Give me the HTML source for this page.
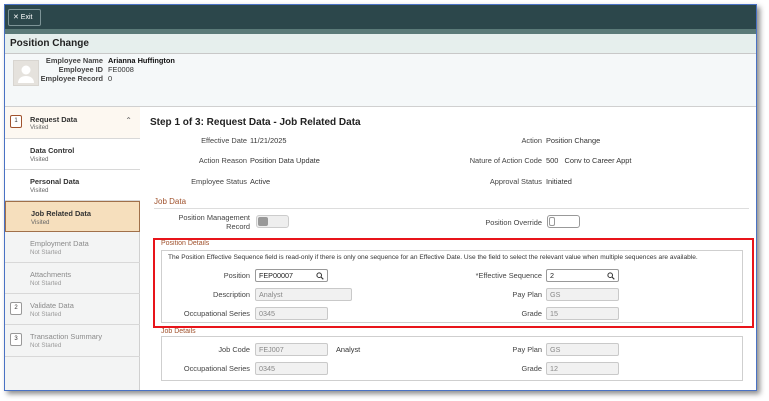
<!DOCTYPE html>
<html><head><meta charset="utf-8"><style>
*{box-sizing:border-box;margin:0;padding:0}
body{width:769px;height:401px;background:#fff;font-family:"Liberation Sans",Arial,sans-serif;position:relative;overflow:hidden;color:#333}
.frame{position:absolute;left:4px;top:4px;width:753px;height:387px;border:1px solid #4a72c4;box-shadow:3px 3px 5px rgba(0,0,0,.45);overflow:hidden;background:#fff}
.a{position:absolute}
.hdr{left:0;top:0;width:751px;height:24px;background:#2c474b}
.ban{left:0;top:24px;width:751px;height:5px;background:#5b7a78}
.exit{left:3px;top:4px;width:33px;height:17px;border:1px solid #7d9497;border-radius:2px;color:#fff;font-size:7px;line-height:15px;padding-left:4px}
.title{left:0;top:29px;width:751px;height:20px;background:#e6efed;border-bottom:1px solid #c8c8c8;font-weight:bold;font-size:10px;line-height:19px;padding-left:5px;color:#222}
.emp{left:0;top:49px;width:751px;height:53px;background:#f5f8f9;border-bottom:1px solid #d0d0d0}
.av{left:8px;top:6px;width:26px;height:26px;background:#e5e2dd;border:1px solid #d8d5d0}
.l{font-size:7.4px;color:#444;text-align:right}
.v{font-size:7.4px;color:#333}
.side{left:0;top:102px;width:135px;height:285px;background:#f3f4f4;border-right:1px solid #d0d0d0}
.it{position:absolute;left:0;width:135px;height:31px;border-bottom:1px solid #d8d8d8;font-size:7px}
.it b{position:absolute;left:25px;top:7px;font-size:7.4px}
.it i{position:absolute;left:25px;top:17px;font-style:normal;font-size:6.2px;color:#666}
.gr b{color:#8a8a8a;font-weight:normal}
.gr i{color:#999}
.num{position:absolute;left:5px;top:8px;width:12px;height:13px;border:1px solid #999;border-radius:2px;font-size:6px;text-align:center;line-height:11px;background:#fff}
.sec{font-size:8px;color:#a0522d}
.box{border:1px solid #cfcfcf}
.in{position:absolute;height:13px;border:1px solid #c9c9c9;background:#f1f1f1;font-size:7.2px;color:#888;line-height:11px;padding-left:3px;border-radius:2px}
.inw{background:#fff;color:#222;border-color:#999}
.q{position:absolute;right:3px;top:2px}
</style></head><body>
<div class="frame">
<div class="a hdr"></div>
<div class="a ban"></div>
<div class="a exit">✕ Exit</div>
<div class="a title">Position Change</div>
<div class="a emp">
 <div class="a av"><svg width="24" height="24" viewBox="0 0 24 24"><circle cx="12" cy="9" r="4.5" fill="#fff"/><path d="M4 22c0-5 4-7 8-7s8 2 8 7z" fill="#fff"/></svg></div>
 <div class="a l" style="left:40px;top:2px;width:58px;font-weight:bold">Employee Name</div><div class="a v" style="left:103px;top:2px;font-weight:bold;color:#111">Arianna Huffington</div>
 <div class="a l" style="left:40px;top:11px;width:58px;font-weight:bold">Employee ID</div><div class="a v" style="left:103px;top:11px">FE0008</div>
 <div class="a l" style="left:30px;top:20px;width:68px;font-weight:bold">Employee Record</div><div class="a v" style="left:103px;top:20px">0</div>
</div>
<div class="a side">
 <div class="it" style="top:0;height:32px;background:#fdf8f1"><div class="num" style="border-color:#a0522d">1</div><b style="top:8px">Request Data</b><i style="top:17px">Visited</i><span style="position:absolute;right:8px;top:9px;font-size:8px;color:#666">⌃</span></div>
 <div class="it" style="top:32px;background:#fff"><b>Data Control</b><i>Visited</i></div>
 <div class="it" style="top:63px;background:#fff"><b>Personal Data</b><i>Visited</i></div>
 <div class="it" style="top:94px;background:#f6dfbd;border:1px solid #a0704a"><b>Job Related Data</b><i>Visited</i></div>
 <div class="it gr" style="top:125px"><b>Employment Data</b><i>Not Started</i></div>
 <div class="it gr" style="top:156px"><b>Attachments</b><i>Not Started</i></div>
 <div class="it gr" style="top:187px"><div class="num">2</div><b>Validate Data</b><i>Not Started</i></div>
 <div class="it gr" style="top:218px;height:32px"><div class="num">3</div><b>Transaction Summary</b><i>Not Started</i></div>
</div>
<div class="a" style="left:145px;top:112px;font-weight:bold;font-size:10px;color:#222">Step 1 of 3: Request Data - Job Related Data</div>
<div class="a l" style="left:150px;top:131px;width:92px">Effective Date</div><div class="a v" style="left:245px;top:131px">11/21/2025</div>
<div class="a l" style="left:150px;top:151px;width:92px">Action Reason</div><div class="a v" style="left:245px;top:151px">Position Data Update</div>
<div class="a l" style="left:150px;top:172px;width:92px">Employee Status</div><div class="a v" style="left:245px;top:172px">Active</div>
<div class="a l" style="left:430px;top:131px;width:107px">Action</div><div class="a v" style="left:541px;top:131px">Position Change</div>
<div class="a l" style="left:430px;top:151px;width:107px">Nature of Action Code</div><div class="a v" style="left:541px;top:151px">500&nbsp;&nbsp; Conv to Career Appt</div>
<div class="a l" style="left:430px;top:172px;width:107px">Approval Status</div><div class="a v" style="left:541px;top:172px">Initiated</div>
<div class="a sec" style="left:149px;top:192px">Job Data</div>
<div class="a" style="left:149px;top:203px;width:595px;border-top:1px solid #ddd"></div>
<div class="a l" style="left:150px;top:208px;width:95px;line-height:9px">Position Management<br>Record</div>
<div class="a" style="left:251px;top:210px;width:33px;height:13px;border:1px solid #ccc;border-radius:3px;background:#eee"><div style="margin:1px;width:10px;height:9px;background:#999;border-radius:2px"></div></div>
<div class="a l" style="left:430px;top:213px;width:107px">Position Override</div>
<div class="a" style="left:542px;top:210px;width:33px;height:13px;border:1px solid #999;border-radius:3px;background:#fff"><div style="margin:1px;width:6px;height:9px;border:1px solid #999;border-radius:2px"></div></div>
<div class="a sec" style="left:156px;top:235px;font-size:7px">Position Details</div>
<div class="a box" style="left:156px;top:245px;width:582px;height:73px"></div>
<div class="a v" style="left:163px;top:249px;font-size:6.6px">The Position Effective Sequence field is read-only if there is only one sequence for an Effective Date. Use the field to select the relevant value when multiple sequences are available.</div>
<div class="a l" style="left:150px;top:266px;width:95px">Position</div><div class="in inw" style="left:250px;top:264px;width:73px">FEP00007<svg class="q" width="8" height="8" viewBox="0 0 8 8"><circle cx="3.2" cy="3.2" r="2.3" fill="none" stroke="#333" stroke-width="1"/><path d="M5 5l2.3 2.3" stroke="#333" stroke-width="1.1"/></svg></div>
<div class="a l" style="left:150px;top:285px;width:95px">Description</div><div class="in" style="left:250px;top:283px;width:97px">Analyst</div>
<div class="a l" style="left:150px;top:304px;width:95px">Occupational Series</div><div class="in" style="left:250px;top:302px;width:73px">0345</div>
<div class="a l" style="left:430px;top:266px;width:107px">*Effective Sequence</div><div class="in inw" style="left:541px;top:264px;width:73px">2<svg class="q" width="8" height="8" viewBox="0 0 8 8"><circle cx="3.2" cy="3.2" r="2.3" fill="none" stroke="#333" stroke-width="1"/><path d="M5 5l2.3 2.3" stroke="#333" stroke-width="1.1"/></svg></div>
<div class="a l" style="left:430px;top:285px;width:107px">Pay Plan</div><div class="in" style="left:541px;top:283px;width:73px">GS</div>
<div class="a l" style="left:430px;top:304px;width:107px">Grade</div><div class="in" style="left:541px;top:302px;width:73px">15</div>
<div class="a" style="left:148px;top:233px;width:601px;height:90px;border:2px solid #e8141a"></div>
<div class="a sec" style="left:156px;top:323px;font-size:7px">Job Details</div>
<div class="a box" style="left:156px;top:331px;width:582px;height:45px"></div>
<div class="a l" style="left:150px;top:340px;width:95px">Job Code</div><div class="in" style="left:250px;top:338px;width:73px">FEJ007</div><div class="a v" style="left:331px;top:340px">Analyst</div>
<div class="a l" style="left:150px;top:359px;width:95px">Occupational Series</div><div class="in" style="left:250px;top:357px;width:73px">0345</div>
<div class="a l" style="left:430px;top:340px;width:107px">Pay Plan</div><div class="in" style="left:541px;top:338px;width:73px">GS</div>
<div class="a l" style="left:430px;top:359px;width:107px">Grade</div><div class="in" style="left:541px;top:357px;width:73px">12</div>
</div>
</body></html>
